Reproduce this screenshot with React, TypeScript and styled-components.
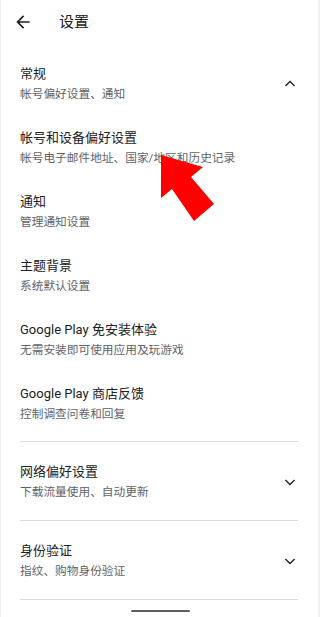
import styled, { createGlobalStyle } from 'styled-components';

const GlobalStyle = createGlobalStyle`
  html, body {
    margin: 0;
    padding: 0;
    background: #ffffff;
  }
  body {
    font-family: Roboto, "Noto Sans CJK SC", "Noto Sans", sans-serif;
    -webkit-font-smoothing: antialiased;
  }
`;

interface Item {
  title: string;
  subtitle: string;
}

interface Section {
  title: string;
  subtitle: string;
  open?: boolean;
  items?: Item[];
}

const sections: Section[] = [
  {
    title: '常规',
    subtitle: '帐号偏好设置、通知',
    open: true,
    items: [
      { title: '帐号和设备偏好设置', subtitle: '帐号电子邮件地址、国家/地区和历史记录' },
      { title: '通知', subtitle: '管理通知设置' },
      { title: '主题背景', subtitle: '系统默认设置' },
      { title: 'Google Play 免安装体验', subtitle: '无需安装即可使用应用及玩游戏' },
      { title: 'Google Play 商店反馈', subtitle: '控制调查问卷和回复' },
    ],
  },
  { title: '网络偏好设置', subtitle: '下载流量使用、自动更新' },
  { title: '身份验证', subtitle: '指纹、购物身份验证' },
];

const S = {
  Screen: styled.div`
    position: relative;
    width: 320px;
    height: 617px;
    box-sizing: border-box;
    border-left: 1px solid #f1f1f1;
    border-right: 2px solid #f1f1f1;
    overflow: hidden;
    background: #ffffff;
  `,
  Header: styled.header`
    height: 44px;
    display: flex;
    align-items: center;
    padding-left: 12px;
  `,
  BackButton: styled.button`
    all: unset;
    width: 20px;
    height: 20px;
    display: flex;
    align-items: center;
    justify-content: center;
    color: #202124;
  `,
  HeaderTitle: styled.h1`
    margin: 0 0 0 26px;
    font-size: 15px;
    font-weight: 400;
    color: #202124;
    line-height: 20px;
  `,
  Section: styled.section<{ $open?: boolean }>`
    margin: 0 20px 0 19px;
    padding: ${({ $open }) => ($open ? '20px 0 5px' : '20px 0 18px')};
    border-bottom: 1px solid #dadce0;
  `,
  SectionHead: styled.div`
    display: flex;
    align-items: center;
    justify-content: space-between;
  `,
  Texts: styled.div`
    display: flex;
    flex-direction: column;
  `,
  Title: styled.div`
    font-size: 13px;
    line-height: 20px;
    color: #202124;
  `,
  Subtitle: styled.div`
    font-size: 11.7px;
    line-height: 20px;
    color: #5f6368;
    white-space: nowrap;
  `,
  Chevron: styled.span`
    width: 20px;
    height: 20px;
    margin-right: -2px;
    display: flex;
    color: #202124;
  `,
  List: styled.div`
    padding-top: 12px;
    display: flex;
    flex-direction: column;
  `,
  Row: styled.div`
    height: 64px;
    box-sizing: border-box;
    padding: 12px 0;
  `,
  HomeBar: styled.div`
    position: absolute;
    left: 130px;
    bottom: 5px;
    width: 59px;
    height: 2px;
    border-radius: 1px;
    background: #5f5f5f;
  `,
  Pointer: styled.svg`
    position: absolute;
    left: 0;
    top: 0;
    pointer-events: none;
  `,
};

function BackIcon() {
  return (
    <svg width="20" height="20" viewBox="0 0 24 24">
      <path d="M20 11H7.83l5.59-5.59L12 4l-8 8 8 8 1.41-1.41L7.83 13H20v-2z" fill="currentColor" />
    </svg>
  );
}

function ChevronIcon({ up }: { up?: boolean }) {
  return (
    <svg width="20" height="20" viewBox="0 0 24 24">
      <path
        d={up ? 'M6.5 14.5L12 9l5.5 5.5' : 'M6.5 9.5L12 15l5.5-5.5'}
        fill="none"
        stroke="currentColor"
        strokeWidth="1.6"
      />
    </svg>
  );
}

export default function App() {
  return (
    <>
      <GlobalStyle />
      <S.Screen>
        <S.Header>
          <S.BackButton type="button" aria-label="返回">
            <BackIcon />
          </S.BackButton>
          <S.HeaderTitle>设置</S.HeaderTitle>
        </S.Header>

        {sections.map((section) => (
          <S.Section key={section.title} $open={section.open}>
            <S.SectionHead>
              <S.Texts>
                <S.Title>{section.title}</S.Title>
                <S.Subtitle>{section.subtitle}</S.Subtitle>
              </S.Texts>
              <S.Chevron>
                <ChevronIcon up={section.open} />
              </S.Chevron>
            </S.SectionHead>
            {section.open && section.items && (
              <S.List>
                {section.items.map((item) => (
                  <S.Row key={item.title}>
                    <S.Title>{item.title}</S.Title>
                    <S.Subtitle>{item.subtitle}</S.Subtitle>
                  </S.Row>
                ))}
              </S.List>
            )}
          </S.Section>
        ))}

        <S.HomeBar />

        <S.Pointer width="320" height="617" viewBox="0 0 320 617">
          <polygon points="160,155 202,167 190,177 213,204 193,221 171,189 160,198" fill="#ff0000" />
        </S.Pointer>
      </S.Screen>
    </>
  );
}
